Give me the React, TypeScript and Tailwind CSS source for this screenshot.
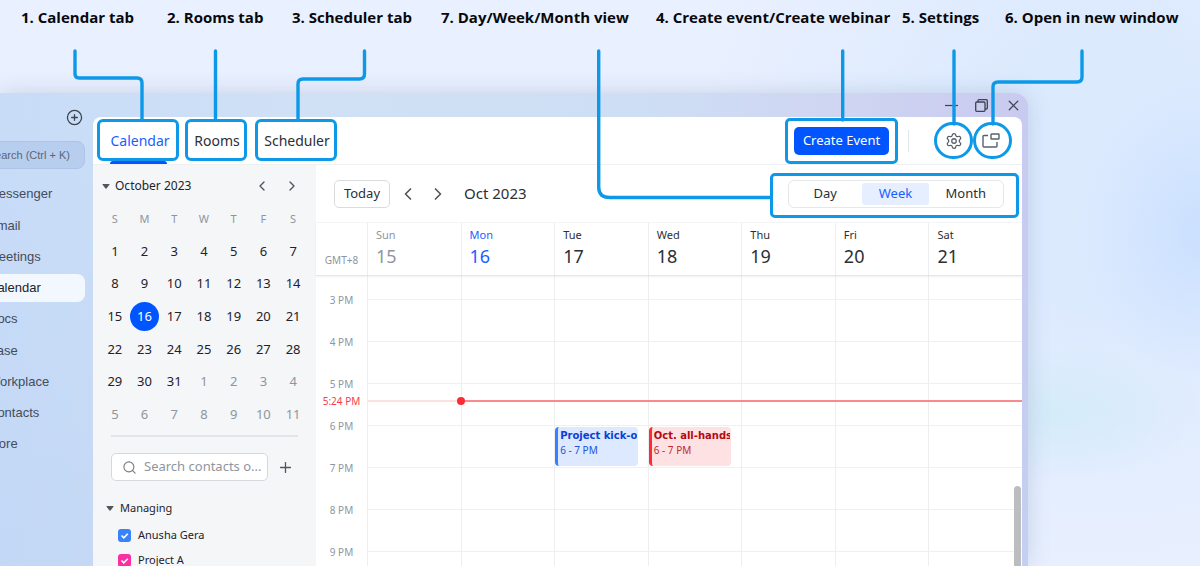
import { ChevronLeft, ChevronRight, CirclePlus, Plus, Search, Settings, X } from "lucide-react";
import { clsx } from "clsx";

const NAV_ITEMS = ["Messenger", "Email", "Meetings", "Calendar", "Docs", "Base", "Workplace", "Contacts", "More"];

const WEEKDAYS = ["S", "M", "T", "W", "T", "F", "S"];

// October 2023 starts on a Sunday; the last 11 cells belong to November
const MONTH_CELLS = Array.from({ length: 42 }, (_, i) => ({
  day: i < 31 ? i + 1 : i - 30,
  outside: i >= 31,
}));

type CalendarEvent = {
  title: string;
  time: string;
  hour: number;
  className: string;
  titleClassName: string;
};

const DAYS: { name: string; date: number; event?: CalendarEvent }[] = [
  { name: "Sun", date: 15 },
  { name: "Mon", date: 16 },
  {
    name: "Tue",
    date: 17,
    event: {
      title: "Project kick-off",
      time: "6 - 7 PM",
      hour: 6,
      className: "border-[#3780ff] bg-[#dce9fe] text-[#1d52d6]",
      titleClassName: "text-[#0941d4]",
    },
  },
  {
    name: "Wed",
    date: 18,
    event: {
      title: "Oct. all-hands",
      time: "6 - 7 PM",
      hour: 6,
      className: "border-[#fb2c36] bg-[#fee1e2] text-[#c02a2f]",
      titleClassName: "text-[#b30a12]",
    },
  },
  { name: "Thu", date: 19 },
  { name: "Fri", date: 20 },
  { name: "Sat", date: 21 },
];

const HOURS = [3, 4, 5, 6, 7, 8, 9];
const HOUR_HEIGHT = 42;
const GRID_TOP = 23;

const hourToY = (hour: number) => GRID_TOP + (hour - 3) * HOUR_HEIGHT;

const CALENDARS = [
  { id: "anusha", name: "Anusha Gera", className: "checked:bg-[#3883fb]" },
  { id: "project-a", name: "Project A", className: "checked:bg-[#fb2fa4]" },
];

function Legend() {
  return (
    <ol className="flex h-[93px] shrink-0 justify-between pt-[5px] font-['Open_Sans','Noto_Sans',sans-serif] text-[15px] leading-6 font-bold whitespace-nowrap text-[#08090c]">
      <li className="flex pl-[21px]">
        <span className="w-[146px]">1. Calendar tab</span>
        <span className="w-[125px]">2. Rooms tab</span>
        <span>3. Scheduler tab</span>
      </li>
      <li className="flex">
        <span className="w-[215px]">7. Day/Week/Month view</span>
        <span className="w-[246px]">4. Create event/Create webinar</span>
        <span className="w-[103px]">5. Settings</span>
        <span className="w-[195px]">6. Open in new window</span>
      </li>
    </ol>
  );
}

function Connectors() {
  const line = { fill: "none", stroke: "#0d99e8", strokeWidth: 3.4, strokeLinecap: "round" as const };
  return (
    <>
      <svg className="pointer-events-none absolute top-0 left-0 z-10" width="400" height="121" viewBox="0 0 400 121" aria-hidden="true">
        <g {...line}>
          <path d="M75 51V74q0 4 4 4H137q5 0 5 5V120" />
          <path d="M215.500 51V120" />
          <path d="M364.500 51V74q0 5-5 5H303q-5 0-5 5V120" />
        </g>
      </svg>
      <svg className="pointer-events-none absolute top-0 right-0 z-10" width="620" height="210" viewBox="580 0 620 210" aria-hidden="true">
        <g {...line}>
          <path d="M598.700 51V187q0 10.500 11 10.500H771" />
          <path d="M842.700 51V120" />
          <path d="M954 51V124" />
          <path d="M1082 51V77q0 5-5 5H998q-5 0-5 5V124" />
        </g>
      </svg>
    </>
  );
}

function AppNav() {
  return (
    <aside className="flex w-[93px] shrink-0 flex-col overflow-hidden pr-2 font-['Liberation_Sans',sans-serif] text-[#444c5a]">
      <button type="button" aria-label="New" className="mt-4 mr-[2px] self-end">
        <CirclePlus className="size-[17px] text-[#3d434d]" strokeWidth={1.8} />
      </button>
      <button
        type="button"
        className="mt-[15px] -ml-10 h-7 shrink-0 rounded-lg border border-[#adc4e6] bg-[#b7ceee] pr-[14px] text-right text-[11px] whitespace-nowrap text-[#5b6676]"
      >
        Search (Ctrl + K)
      </button>
      <nav className="mt-[11px] -ml-10 flex h-[278px] shrink-0 flex-col justify-between">
        {NAV_ITEMS.map((item) => (
          <a
            key={item}
            href="#"
            className={clsx(
              "flex h-7 items-center rounded-lg pl-7 text-[13px]",
              item === "Calendar" && "bg-[#f3f8ff] text-[#20242b]"
            )}
          >
            {item}
          </a>
        ))}
      </nav>
    </aside>
  );
}

function TitleBar() {
  return (
    <div className="flex h-6 shrink-0 items-center justify-end gap-[17px] text-[#3d4350]">
      <button type="button" aria-label="Minimize">
        <svg className="size-[13px]" viewBox="0 0 13 13" fill="none" stroke="currentColor" strokeWidth="1.200">
          <path d="M0 6.500h13" />
        </svg>
      </button>
      <button type="button" aria-label="Restore">
        <svg className="size-[13px]" viewBox="0 0 13 13" fill="none" stroke="currentColor" strokeWidth="1.300">
          <rect x="0.700" y="3" width="9.300" height="9.300" rx="1" />
          <path d="M3 3V1.700q0-1 1-1h7.300q1 0 1 1V9q0 1-1 1H10" />
        </svg>
      </button>
      <button type="button" aria-label="Close">
        <X className="size-[17px]" strokeWidth={1.7} />
      </button>
    </div>
  );
}

function TabBar() {
  return (
    <div className="flex h-12 shrink-0 justify-between border-b border-[#eff0f2] pr-[10px] pl-1 text-[14px] text-[#2b2f36]">
      <div className="flex pt-[2px]">
        <div className="flex flex-col items-center">
          <button type="button" className="h-[42px] w-[82px] rounded-[6px] border-[3px] border-[#0d99e8] pl-1 text-[#1a5eff]">
            Calendar
          </button>
          <span className="h-[3px] w-[57px] rounded-t-[3px] bg-[#0055ff]" />
        </div>
        <button type="button" className="ml-[6px] h-[42px] w-[62px] rounded-[6px] border-[3px] border-[#0d99e8] pl-[2px]">
          Rooms
        </button>
        <button type="button" className="ml-2 h-[42px] w-[82px] rounded-[6px] border-[3px] border-[#0d99e8] pl-[2px]">
          Scheduler
        </button>
      </div>
      <div className="flex items-center">
        <div className="rounded-[5px] border-[3px] border-[#0d99e8] p-[6px]">
          <button type="button" className="block h-7 w-[95px] rounded-[5px] bg-[#0055ff] text-[13px] text-white">
            Create Event
          </button>
        </div>
        <span className="mr-[25px] ml-[10px] h-[22px] w-px bg-[#e3e5e8]" />
        <button
          type="button"
          aria-label="Settings"
          className="flex h-[37px] w-[39px] items-center justify-center rounded-full border-[3px] border-[#0d99e8] text-[#59606c]"
        >
          <Settings className="size-[18px]" strokeWidth={1.7} />
        </button>
        <button
          type="button"
          aria-label="Open in new window"
          className="flex h-[37px] w-[39px] items-center justify-center rounded-full border-[3px] border-[#0d99e8] pr-1 text-[#59606c]"
        >
          <svg className="h-[15px] w-[18px]" viewBox="0 0 18 15" fill="none" stroke="currentColor" strokeWidth="1.400" strokeLinejoin="round">
            <path d="M6 2.500H2q-1 0-1 1V13q0 1 1 1H14q1 0 1-1V9" />
            <rect x="9" y="1" width="8" height="5" rx="0.600" />
          </svg>
        </button>
      </div>
    </div>
  );
}

function Triangle() {
  return (
    <svg className="h-[5px] w-2 text-[#51565d]" viewBox="0 0 8 5" fill="currentColor" aria-hidden="true">
      <path d="M1 0h6q1 0 .4.800L4.500 4.600q-.5.500-1 0L.6.800Q0 0 1 0z" />
    </svg>
  );
}

function Sidebar() {
  return (
    <aside className="flex w-[223px] shrink-0 flex-col bg-[#f4f6f8] text-[#1f2329]">
      <div className="flex h-[42px] shrink-0 items-center pl-[9px]">
        <button type="button" className="flex items-center gap-[5px] text-[12px]">
          <Triangle />
          October 2023
        </button>
        <div className="mr-4 ml-auto flex gap-[14px] text-[#51565d]">
          <button type="button" aria-label="Previous month">
            <ChevronLeft className="size-4" strokeWidth={2} />
          </button>
          <button type="button" aria-label="Next month">
            <ChevronRight className="size-4" strokeWidth={2} />
          </button>
        </div>
      </div>
      <table className="ml-[7px] h-[224px] w-[208px] shrink-0 table-fixed text-center">
        <thead>
          <tr className="h-7 text-[11px] text-[#8f959e]">
            {WEEKDAYS.map((day, i) => (
              <th key={i} className="p-0 pb-[3px] font-normal">
                {day}
              </th>
            ))}
          </tr>
        </thead>
        <tbody className="text-[13px]">
          {[0, 1, 2, 3, 4, 5].map((week) => (
            <tr key={week}>
              {MONTH_CELLS.slice(week * 7, week * 7 + 7).map(({ day, outside }, i) => (
                <td key={i} className={clsx("p-0", outside && "text-[#8f959e]")}>
                  {day === 16 ? (
                    <span className="mx-auto -my-2 flex size-[29px] items-center justify-center rounded-full bg-[#0055ff] text-white">
                      {day}
                    </span>
                  ) : (
                    day
                  )}
                </td>
              ))}
            </tr>
          ))}
        </tbody>
      </table>
      <div className="mt-1 ml-[18px] w-[187px] border-t-2 border-[#e2e4e7]" />
      <div className="mt-4 flex shrink-0 items-center gap-[9px] pl-[18px]">
        <label className="flex h-7 w-[157px] items-center gap-[7px] rounded-[5px] border border-[#d5d8dc] bg-white pl-[10px]">
          <Search className="size-[15px] shrink-0 text-[#767c86]" strokeWidth={1.8} />
          <input
            type="text"
            aria-label="Search contacts"
            placeholder="Search contacts o..."
            className="w-full min-w-0 text-[13px] outline-none placeholder:text-[#8f959e]"
          />
        </label>
        <button type="button" aria-label="Add calendar" className="text-[#51565d]">
          <Plus className="size-[17px]" strokeWidth={1.8} />
        </button>
      </div>
      <div className="mt-[18px] flex flex-col pl-[13px] text-[11px]">
        <button type="button" className="flex h-[18px] items-center gap-[6px] self-start">
          <Triangle />
          Managing
        </button>
        <div className="mt-[6px] ml-3">
          {CALENDARS.map((cal) => (
            <div key={cal.id} className="flex h-[25px] items-center gap-[7px]">
              <span className="relative flex">
                <input
                  id={cal.id}
                  type="checkbox"
                  defaultChecked
                  className={clsx("size-[13px] appearance-none rounded-[3px] border border-transparent bg-white", cal.className)}
                />
                <svg className="pointer-events-none absolute inset-0 size-[13px]" viewBox="0 0 13 13" fill="none" stroke="#fff" strokeWidth="1.600">
                  <path d="M3.500 6.500l2.300 2.300 4-4" />
                </svg>
              </span>
              <label htmlFor={cal.id}>{cal.name}</label>
            </div>
          ))}
        </div>
      </div>
    </aside>
  );
}

function WeekToolbar() {
  return (
    <div className="flex h-[57px] shrink-0 items-center justify-between pt-1 pr-[3px] pl-[18px] text-[#2b2f36]">
      <div className="flex items-center pb-1">
        <button type="button" className="h-7 w-14 rounded-[5px] border border-[#d9dbdf] text-[13px]">
          Today
        </button>
        <button type="button" aria-label="Previous week" className="ml-2 text-[#51565d]">
          <ChevronLeft className="size-5" strokeWidth={2} />
        </button>
        <button type="button" aria-label="Next week" className="ml-[10px] text-[#51565d]">
          <ChevronRight className="size-5" strokeWidth={2} />
        </button>
        <h1 className="ml-4 text-[15px]">Oct 2023</h1>
      </div>
      <div className="flex h-[45px] w-[249px] justify-center rounded-[5px] border-[3px] border-[#0d99e8] pt-1 pl-[2px]">
        <div className="flex h-7 w-[216px] items-center justify-between rounded-md border border-[#e6e7ea] text-[13px]">
          <button type="button" className="h-[22px] flex-1">
            Day
          </button>
          <button type="button" className="h-[22px] w-[67px] rounded-[3px] bg-[#e6efff] text-[#1a5eff]">
            Week
          </button>
          <button type="button" className="h-[22px] flex-1">
            Month
          </button>
        </div>
      </div>
    </div>
  );
}

function WeekView() {
  return (
    <section className="relative flex min-w-0 flex-1 flex-col bg-white">
      <WeekToolbar />
      <div className="z-[1] flex h-[54px] shrink-0 border-y border-t-[#f4f5f6] border-b-[#e4e6e8] shadow-[0_1px_2px_rgba(0,0,0,0.060)]">
        <div className="w-[51px] shrink-0 pt-[30px] text-center text-[10px] leading-[14px] text-[#8f959e]">GMT+8</div>
        <div className="grid flex-1 grid-cols-7">
          {DAYS.map((day) => (
            <div
              key={day.name}
              className={clsx(
                "border-l border-[#eceef0] pt-1 pl-2",
                day.name === "Sun" && "text-[#8f959e]",
                day.name === "Mon" && "text-[#1a5eff]",
                day.date > 16 && "text-[#2b2f36]"
              )}
            >
              <div className="text-[11px] leading-[15px]">{day.name}</div>
              <div className="text-[18px] leading-7">{day.date}</div>
            </div>
          ))}
        </div>
      </div>
      <div className="relative flex min-h-0 flex-1 overflow-hidden">
        <div className="relative w-[51px] shrink-0 pt-[3px] text-center text-[10px] text-[#8f959e]">
          {HOURS.map((hour) => (
            <div key={hour} className="flex h-[42px] items-center justify-center">
              {hour} PM
            </div>
          ))}
          <div className="absolute top-[117px] w-full leading-4 text-[#fb3b43]">5:24 PM</div>
        </div>
        <div className="relative grid flex-1 grid-cols-7">
          {DAYS.map(({ name, event }) => (
            <div key={name} className="relative border-l border-[#eceef0] pt-[23px]">
              {HOURS.map((hour) => (
                <div key={hour} className="h-[42px] border-t border-[#eef0f1]" />
              ))}
              {event && (
                <div
                  className={clsx(
                    "absolute right-[10px] left-0 h-[39px] overflow-hidden rounded-[4px] border-l-[3px] pt-[1px] pl-[2px] text-[10px] leading-[15px] whitespace-nowrap",
                    event.className
                  )}
                  style={{ top: hourToY(event.hour) + 2 }}
                >
                  <div className={clsx("mr-px overflow-hidden font-['DejaVu_Sans',sans-serif] font-bold", event.titleClassName)}>
                    {event.title}
                  </div>
                  <div>{event.time}</div>
                </div>
              )}
            </div>
          ))}
          {/* current time marker */}
          <div className="absolute inset-x-0 top-[121px] grid h-2 grid-cols-7 items-center">
            <span className="h-[2px] bg-[#fee0e0]" />
            <span className="col-span-6 flex items-center">
              <span className="-ml-1 size-2 rounded-full bg-[#fb2c36]" />
              <span className="h-[2px] flex-1 bg-[#fa8a8c]" />
            </span>
          </div>
        </div>
        <div className="absolute top-[210px] right-[1px] bottom-0 w-[7px] rounded-t-full bg-[#bbbdbf]" />
      </div>
    </section>
  );
}

export default function App() {
  return (
    <div className="relative flex h-screen flex-col overflow-hidden bg-[radial-gradient(ellipse_120px_150px_at_100%_41%,#cbe0ff,transparent),radial-gradient(ellipse_150px_70px_at_88%_73%,#d4ebfa,transparent),radial-gradient(ellipse_400px_420px_at_92%_30%,#dceafe_30%,transparent)] bg-[#e9f0ff] font-['Noto_Sans',sans-serif]">
      <Legend />
      <Connectors />
      <div className="mr-[172px] flex min-h-0 flex-1 rounded-tr-[14px] bg-[linear-gradient(180deg,transparent_0,transparent_30px,rgba(190,212,244,0.500)_100%),linear-gradient(90deg,#c8dcf8,#d0e1f5_30%,#cedff5_60%,#cfd5f2_82%,#c9caef)] shadow-[0_0_22px_rgba(90,115,150,0.240)]">
        <AppNav />
        <div className="mr-[6px] flex min-w-0 flex-1 flex-col">
          <TitleBar />
          <main className="flex min-h-0 flex-1 flex-col overflow-hidden rounded-t-lg bg-white">
            <TabBar />
            <div className="flex min-h-0 flex-1">
              <Sidebar />
              <WeekView />
            </div>
          </main>
        </div>
      </div>
    </div>
  );
}
